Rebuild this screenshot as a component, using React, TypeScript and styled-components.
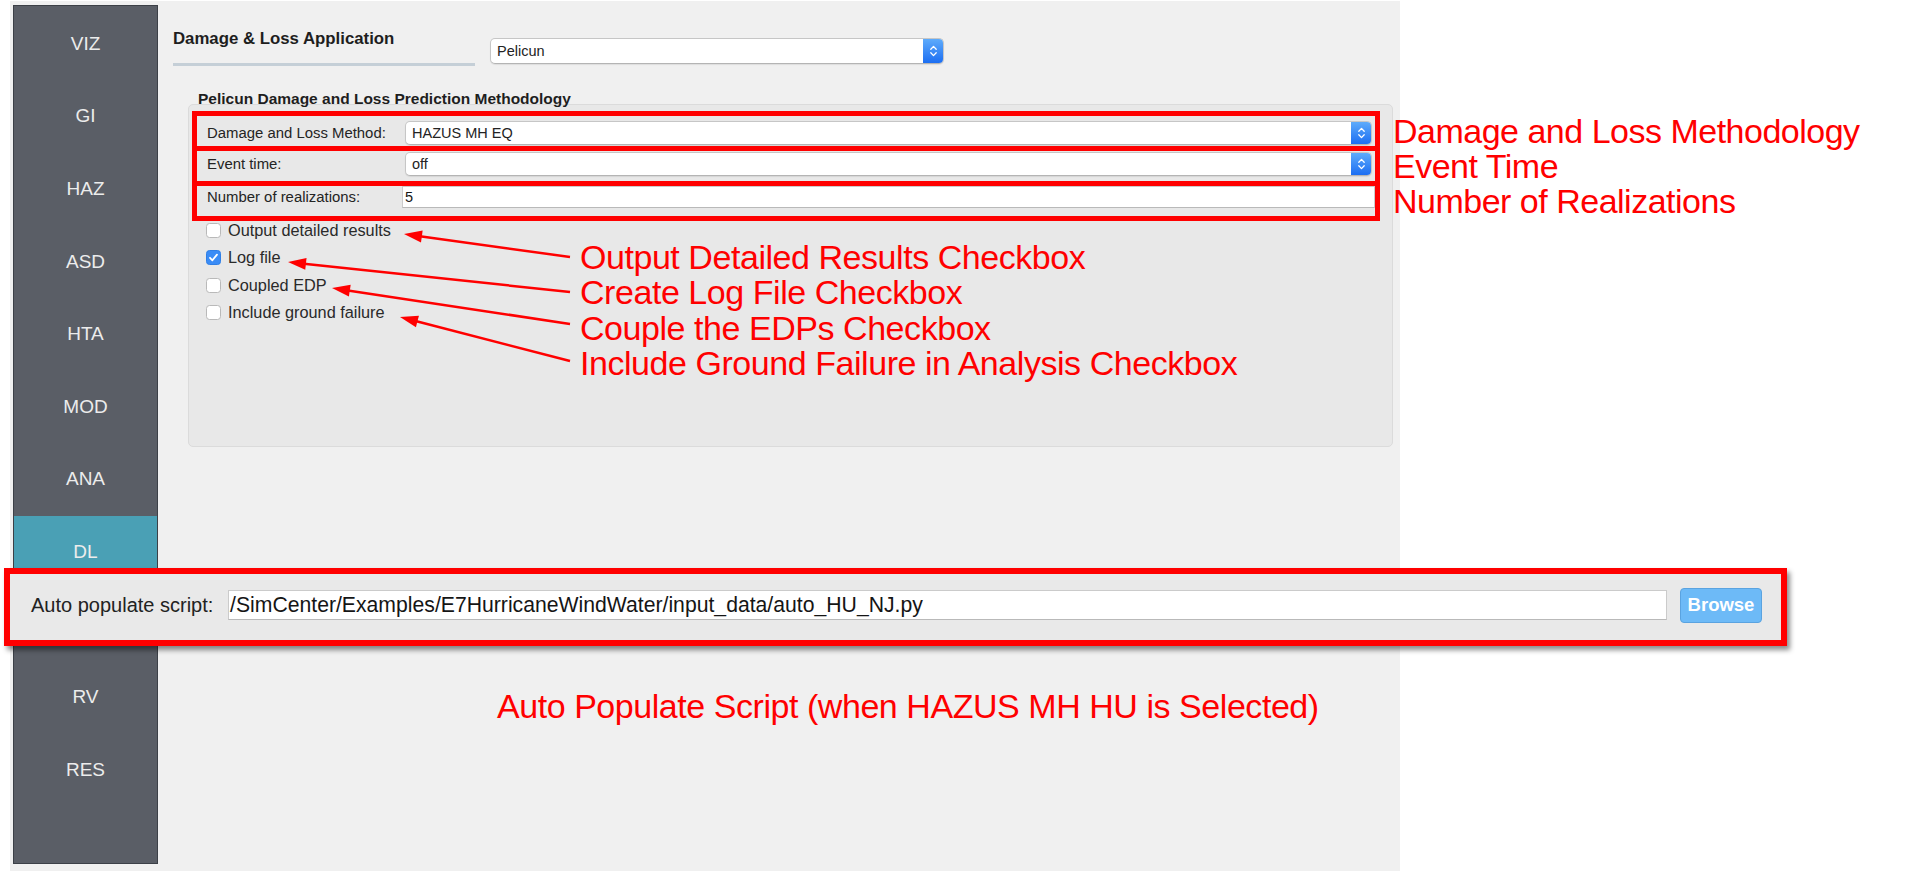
import React from 'react';
import styled, { createGlobalStyle } from 'styled-components';

const UI = `"Liberation Sans", Arial, Helvetica, sans-serif`;

const GlobalStyle = createGlobalStyle`
  html, body { margin: 0; padding: 0; background: #ffffff; }
  body { font-family: ${UI}; }
  *, *::before, *::after { box-sizing: border-box; }
`;

const Page = styled.div`
  position: relative;
  width: 1916px;
  height: 872px;
  overflow: hidden;
  background: #ffffff;
  padding: 1px 0 0 10px;
`;

const Window = styled.div`
  display: flex;
  align-items: flex-start;
  width: 1390px;
  height: 870px;
  background: #f0f0f0;
`;

const Sidebar = styled.nav`
  flex: none;
  width: 145px;
  height: 859px;
  margin: 4px 0 0 3px;
  padding-top: 1.5px;
  background: #5a5e66;
  border: 1px solid #3c4047;
  display: flex;
  flex-direction: column;
`;

const NavItem = styled.div<{ $active?: boolean }>`
  flex: none;
  height: 72.6px;
  display: flex;
  align-items: center;
  justify-content: center;
  background: ${(p) => (p.$active ? '#4aa0b5' : 'transparent')};
  color: #ececec;
  font-size: 19px;
`;

const Main = styled.main`
  flex: 1;
  display: flex;
  flex-direction: column;
  padding: 28px 0 0 15px;
`;

const Header = styled.div`
  display: flex;
  align-items: flex-start;
`;

const TitleBlock = styled.div`
  width: 302px;
  display: flex;
  flex-direction: column;
`;

const Title = styled.div`
  font-size: 16.8px;
  font-weight: 700;
  line-height: 20px;
  color: #1e1e1e;
`;

const TitleBar = styled.div`
  margin-top: 14px;
  height: 3px;
  background: #c5cfd7;
`;

const Combo = styled.div<{ $h: number; $w?: number }>`
  position: relative;
  ${(p) => (p.$w ? `width: ${p.$w}px; flex: none;` : 'flex: 1;')}
  height: ${(p) => p.$h}px;
  display: flex;
  align-items: center;
  padding-left: 6px;
  background: #ffffff;
  border: 1px solid #c6c6c6;
  border-bottom-color: #b4b4b4;
  border-radius: 5px;
  box-shadow: 0 1px 1px rgba(0, 0, 0, 0.08);
  overflow: hidden;
  font-size: 14.5px;
  color: #232323;
`;

const HeaderCombo = styled(Combo)`
  margin: 9px 0 0 15px;
`;

const Stepper = styled.span`
  margin-left: auto;
  align-self: stretch;
  width: 20px;
  display: flex;
  align-items: center;
  justify-content: center;
  background: linear-gradient(#5eabfb, #1c6ef2);
`;

const GroupTitle = styled.div`
  position: relative;
  z-index: 1;
  margin-top: 26px;
  padding-left: 25px;
  font-size: 15.5px;
  font-weight: 700;
  line-height: 14px;
  color: #1e1e1e;
  white-space: nowrap;
`;

const GroupBox = styled.section`
  margin: -2px 0 0 15px;
  width: 1205px;
  height: 343px;
  background: #e8e8e8;
  border: 1px solid #dbdbdb;
  border-radius: 5px;
  padding: 6px 0 0 3px;
`;

const FieldRow = styled.div<{ $pad: number }>`
  position: relative;
  width: 1188px;
  height: 40px;
  border: 5px solid #ff0000;
  padding: ${(p) => p.$pad}px 3px 0 10px;
  & + & {
    margin-top: -5px;
  }
`;

const FieldLine = styled.div`
  display: flex;
  align-items: center;
`;

const FieldLabel = styled.span`
  flex: none;
  width: 198px;
  font-size: 14.9px;
  color: #242424;
  white-space: nowrap;
`;

const TextInput = styled.div<{ $h: number; $size: number }>`
  flex: 1;
  height: ${(p) => p.$h}px;
  display: flex;
  align-items: center;
  padding-left: 2px;
  background: #ffffff;
  border: 1px solid #cbcbcb;
  border-bottom-color: #b9b9b9;
  font-size: ${(p) => p.$size}px;
  color: #151515;
  white-space: nowrap;
  overflow: hidden;
`;

const RowInput = styled(TextInput)`
  margin: 0 -3px 0 -3px;
`;

const RowCallout = styled.span`
  position: absolute;
  left: calc(100% + 18px);
  top: 50%;
  transform: translateY(-50%);
  font-size: 34px;
  letter-spacing: -0.5px;
  line-height: 36px;
  color: #ff0000;
  white-space: nowrap;
`;

const CheckSection = styled.div`
  display: flex;
  margin-top: -4px;
`;

const CheckList = styled.div`
  flex: none;
  width: 388px;
  padding-left: 14px;
  display: flex;
  flex-direction: column;
`;

const CheckRow = styled.label`
  height: 27.3px;
  display: flex;
  align-items: center;
  gap: 7px;
  font-size: 16.3px;
  color: #2a2a2a;
  white-space: nowrap;
`;

const Box = styled.span<{ $checked?: boolean }>`
  flex: none;
  width: 15px;
  height: 15px;
  border-radius: 3.5px;
  display: flex;
  align-items: center;
  justify-content: center;
  background: ${(p) => (p.$checked ? '#3a8cf6' : '#ffffff')};
  border: 1px solid ${(p) => (p.$checked ? '#2f7fe6' : '#b9b9b9')};
`;

const CalloutList = styled.div`
  padding-top: 23px;
  display: flex;
  flex-direction: column;
`;

const Callout = styled.span`
  font-size: 34px;
  letter-spacing: -0.45px;
  line-height: 35.3px;
  color: #ff0000;
  white-space: nowrap;
`;

const AutoNote = styled(Callout)`
  margin-top: 241px;
  padding-left: 324px;
  line-height: 36px;
`;

const ArrowLayer = styled.svg`
  position: absolute;
  left: 0;
  top: 0;
  z-index: 4;
  pointer-events: none;
`;

const Popup = styled.div`
  position: absolute;
  left: 4px;
  top: 568px;
  z-index: 5;
  width: 1783px;
  height: 78px;
  display: flex;
  align-items: center;
  padding: 0 0 4px 21px;
  background: #e9e9e9;
  border: 6px solid #ff0000;
  box-shadow: 3px 4px 5px rgba(0, 0, 0, 0.45);
`;

const PopupLabel = styled.span`
  flex: none;
  width: 197px;
  font-size: 20px;
  color: #222222;
  white-space: nowrap;
`;

const PopupInput = styled(TextInput)`
  flex: none;
  width: 1439px;
  padding-left: 1px;
`;

const BrowseButton = styled.button`
  flex: none;
  margin-left: 13px;
  width: 82px;
  height: 35px;
  padding: 0;
  border: 1px solid #5aa3e0;
  border-radius: 4px;
  background: #6dbaf7;
  color: #ffffff;
  font-family: ${UI};
  font-size: 18.5px;
  font-weight: 700;
`;

const Chevrons = () => (
  <svg width="9" height="14" viewBox="0 0 9 14" fill="none">
    <path d="M1.8 5.2 L4.5 2.4 L7.2 5.2" stroke="#fff" strokeWidth="1.3" strokeLinecap="round" strokeLinejoin="round" />
    <path d="M1.8 8.8 L4.5 11.6 L7.2 8.8" stroke="#fff" strokeWidth="1.3" strokeLinecap="round" strokeLinejoin="round" />
  </svg>
);

const Check = () => (
  <svg width="11" height="11" viewBox="0 0 11 11" fill="none">
    <path d="M2 5.8 L4.4 8.3 L9 2.6" stroke="#fff" strokeWidth="1.8" strokeLinecap="round" strokeLinejoin="round" />
  </svg>
);

const navItems = ['VIZ', 'GI', 'HAZ', 'ASD', 'HTA', 'MOD', 'ANA', 'DL', 'UQ', 'RV', 'RES'];

const checks = [
  { label: 'Output detailed results', checked: false },
  { label: 'Log file', checked: true },
  { label: 'Coupled EDP', checked: false },
  { label: 'Include ground failure', checked: false },
];

const checkCallouts = [
  'Output Detailed Results Checkbox',
  'Create Log File Checkbox',
  'Couple the EDPs Checkbox',
  'Include Ground Failure in Analysis Checkbox',
];

const arrows = [
  { x1: 570, y1: 257, x2: 404, y2: 234 },
  { x1: 570, y1: 292, x2: 288, y2: 262 },
  { x1: 570, y1: 324, x2: 332, y2: 288 },
  { x1: 570, y1: 361, x2: 400, y2: 317 },
];

function arrowGeometry(a: { x1: number; y1: number; x2: number; y2: number }) {
  const dx = a.x2 - a.x1;
  const dy = a.y2 - a.y1;
  const len = Math.hypot(dx, dy);
  const ux = dx / len;
  const uy = dy / len;
  const bx = a.x2 - ux * 18;
  const by = a.y2 - uy * 18;
  const px = -uy * 6;
  const py = ux * 6;
  return {
    bx: bx + ux * 2,
    by: by + uy * 2,
    pts: `${a.x2},${a.y2} ${bx + px},${by + py} ${bx - px},${by - py}`,
  };
}

export default function App() {
  return (
    <>
      <GlobalStyle />
      <Page>
        <Window>
          <Sidebar>
            {navItems.map((n) => (
              <NavItem key={n} $active={n === 'DL'}>
                {n}
              </NavItem>
            ))}
          </Sidebar>
          <Main>
            <Header>
              <TitleBlock>
                <Title>Damage &amp; Loss Application</Title>
                <TitleBar />
              </TitleBlock>
              <HeaderCombo $h={26} $w={454}>
                Pelicun
                <Stepper>
                  <Chevrons />
                </Stepper>
              </HeaderCombo>
            </Header>

            <GroupTitle>Pelicun Damage and Loss Prediction Methodology</GroupTitle>
            <GroupBox>
              <FieldRow $pad={5}>
                <FieldLine>
                  <FieldLabel>Damage and Loss Method:</FieldLabel>
                  <Combo $h={24}>
                    HAZUS MH EQ
                    <Stepper>
                      <Chevrons />
                    </Stepper>
                  </Combo>
                </FieldLine>
                <RowCallout>Damage and Loss Methodology</RowCallout>
              </FieldRow>
              <FieldRow $pad={1}>
                <FieldLine>
                  <FieldLabel>Event time:</FieldLabel>
                  <Combo $h={24}>
                    off
                    <Stepper>
                      <Chevrons />
                    </Stepper>
                  </Combo>
                </FieldLine>
                <RowCallout>Event Time</RowCallout>
              </FieldRow>
              <FieldRow $pad={0}>
                <FieldLine>
                  <FieldLabel>Number of realizations:</FieldLabel>
                  <RowInput $h={22} $size={14.5}>5</RowInput>
                </FieldLine>
                <RowCallout>Number of Realizations</RowCallout>
              </FieldRow>

              <CheckSection>
                <CheckList>
                  {checks.map((c) => (
                    <CheckRow key={c.label}>
                      <Box $checked={c.checked}>{c.checked && <Check />}</Box>
                      {c.label}
                    </CheckRow>
                  ))}
                </CheckList>
                <CalloutList>
                  {checkCallouts.map((t) => (
                    <Callout key={t}>{t}</Callout>
                  ))}
                </CalloutList>
              </CheckSection>
            </GroupBox>

            <AutoNote>Auto Populate Script (when HAZUS MH HU is Selected)</AutoNote>
          </Main>
        </Window>

        <ArrowLayer width={1916} height={872} viewBox="0 0 1916 872">
          {arrows.map((a, i) => {
            const g = arrowGeometry(a);
            return (
              <g key={i}>
                <line x1={a.x1} y1={a.y1} x2={g.bx} y2={g.by} stroke="#ff0000" strokeWidth={2.5} />
                <polygon points={g.pts} fill="#ff0000" />
              </g>
            );
          })}
        </ArrowLayer>

        <Popup>
          <PopupLabel>Auto populate script:</PopupLabel>
          <PopupInput $h={30} $size={21.2}>
            /SimCenter/Examples/E7HurricaneWindWater/input_data/auto_HU_NJ.py
          </PopupInput>
          <BrowseButton>Browse</BrowseButton>
        </Popup>
      </Page>
    </>
  );
}
